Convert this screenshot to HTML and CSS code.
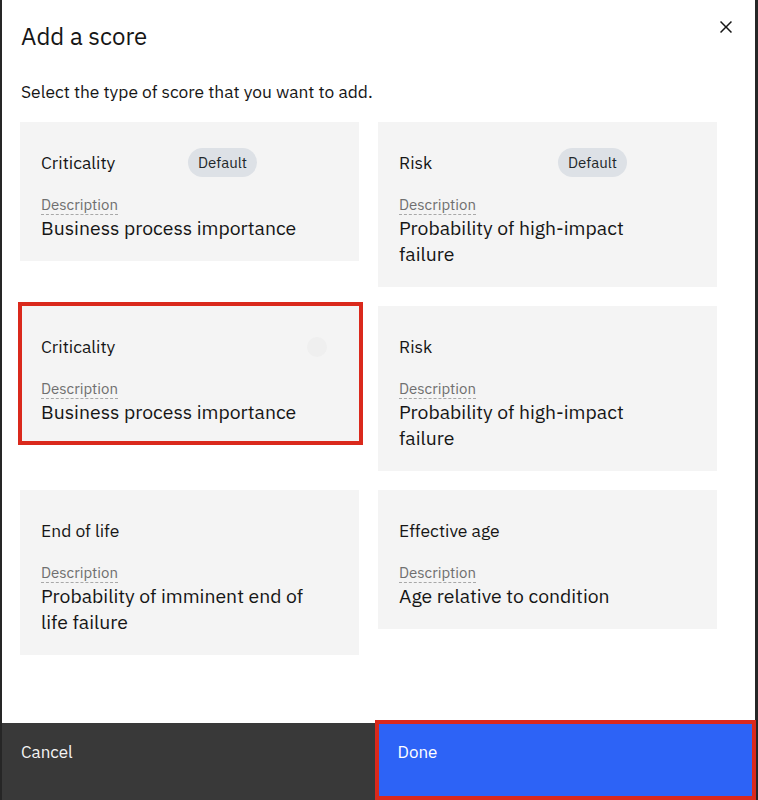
FILE: index.html
```html
<!DOCTYPE html>
<html lang="en">
<head>
<meta charset="utf-8">
<title>Add a score</title>
<link rel="stylesheet" href="styles.css">
</head>
<body>
<div class="modal">
  <div class="modal-body">
    <header class="modal-header">
      <h2 class="modal-title">Add a score</h2>
      <button class="close" aria-label="Close">
        <svg viewBox="0 0 32 32" width="24" height="24" aria-hidden="true"><path d="M24 9.4L22.6 8 16 14.6 9.4 8 8 9.4 14.6 16 8 22.6 9.4 24 16 17.4 22.6 24 24 22.6 17.4 16 24 9.4z" fill="#161616"/></svg>
      </button>
    </header>
    <p class="intro">Select the type of score that you want to add.</p>
    <div class="tiles">
      <div class="tile">
        <div class="tile-head"><span class="tile-title">Criticality</span><span class="tag">Default</span></div>
        <div class="label"><span>Description</span></div>
        <div class="value">Business process importance</div>
      </div>
      <div class="tile">
        <div class="tile-head"><span class="tile-title">Risk</span><span class="tag tag-shift">Default</span></div>
        <div class="label"><span>Description</span></div>
        <div class="value">Probability of high-impact failure</div>
      </div>
      <div class="tile">
        <div class="tile-head"><span class="tile-title">Criticality</span><span class="tile-check"></span></div>
        <div class="label"><span>Description</span></div>
        <div class="value">Business process importance</div>
        <span class="mark mark-tile"></span>
      </div>
      <div class="tile">
        <div class="tile-head"><span class="tile-title">Risk</span></div>
        <div class="label"><span>Description</span></div>
        <div class="value">Probability of high-impact failure</div>
      </div>
      <div class="tile">
        <div class="tile-head"><span class="tile-title">End of life</span></div>
        <div class="label"><span>Description</span></div>
        <div class="value">Probability of imminent end of life failure</div>
      </div>
      <div class="tile">
        <div class="tile-head"><span class="tile-title">Effective age</span></div>
        <div class="label"><span>Description</span></div>
        <div class="value">Age relative to condition</div>
      </div>
    </div>
  </div>
  <footer class="modal-footer">
    <button class="btn btn-secondary">Cancel</button>
    <button class="btn btn-primary">Done<span class="mark mark-btn"></span></button>
  </footer>
</div>
</body>
</html>
```

FILE: styles.css
```css
* { box-sizing: border-box; }

html, body {
  margin: 0;
  height: 100%;
}

body {
  background: #262626;
  font-family: "IBM Plex Sans", Roboto, "Liberation Sans", sans-serif;
  color: #161616;
}

.modal {
  margin-left: 2px;
  width: 753px;
  height: 800px;
  background: #ffffff;
  display: flex;
  flex-direction: column;
}

.modal-body {
  flex: 1;
  padding: 20px 0 0 18px;
}

.modal-header {
  display: flex;
  justify-content: space-between;
  align-items: flex-start;
  padding-left: 1px;
}

.modal-title {
  margin: 0;
  font-size: 24px;
  line-height: 32px;
  font-weight: 400;
}

.close {
  margin: -5px 17px 0 0;
  padding: 0;
  border: 0;
  background: none;
  width: 24px;
  height: 24px;
  display: block;
}

.close svg { display: block; }

.intro {
  margin: 28px 0 18px 1px;
  font-size: 17.4px;
  line-height: 24px;
}

.tiles {
  display: grid;
  grid-template-columns: 339px 339px;
  column-gap: 19px;
  row-gap: 19px;
  align-items: start;
}

.tile {
  position: relative;
  background: #f4f4f4;
  padding: 26px 24px 20px 21px;
}

.tile-head {
  display: grid;
  grid-template-columns: 1fr 1fr;
  align-items: center;
  min-height: 29px;
}

.tile-title {
  font-size: 17.5px;
  line-height: 24px;
}

.tag {
  justify-self: start;
  height: 29px;
  padding: 0 10px;
  border-radius: 15px;
  background: #dde1e6;
  color: #21272a;
  font-size: 15px;
  line-height: 29px;
}

.tag-shift {
  margin-left: 12px;
}

.tile-check {
  grid-column: 2;
  justify-self: end;
  width: 20px;
  height: 20px;
  margin-right: 8px;
  border-radius: 50%;
  background: #efefef;
}

.label {
  margin-top: 18px;
  font-size: 15px;
  line-height: 20px;
  color: #6f6f6f;
}

.label span {
  border-bottom: 1px dashed #a8a8a8;
}

.value {
  max-width: 272px;
  font-size: 19.4px;
  line-height: 26px;
}

.mark {
  position: absolute;
  border: 4px solid #da291c;
  pointer-events: none;
}

.mark-tile {
  left: -2px;
  top: -4px;
  right: -4px;
  bottom: 0;
}

.mark-btn {
  left: -4px;
  top: -3px;
  right: -1px;
  bottom: 0;
}

.modal-footer {
  display: flex;
  height: 77px;
}

.btn {
  flex: 1;
  margin: 0;
  border: 0;
  padding: 18px 19px;
  text-align: left;
  font-family: inherit;
  font-size: 17px;
  line-height: 22px;
  display: flex;
  align-items: flex-start;
}

.btn-secondary {
  background: #393939;
  color: #f4f4f4;
}

.btn-primary {
  position: relative;
  background: #2d63f6;
  color: #ffffff;
}
```
